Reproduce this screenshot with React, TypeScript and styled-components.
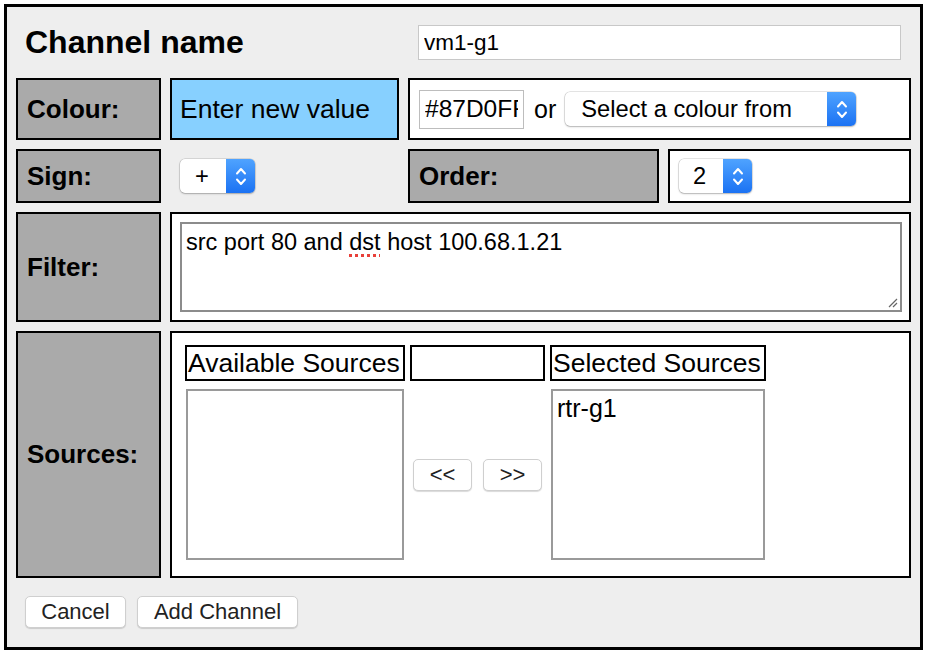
import React from 'react';
import styled, { createGlobalStyle } from 'styled-components';

const GlobalStyle = createGlobalStyle`
  html, body {
    margin: 0;
    padding: 0;
    background: #fff;
  }
  body {
    font-family: "Liberation Sans", Arial, sans-serif;
    color: #000;
  }
`;

const Dialog = styled.div`
  box-sizing: border-box;
  margin: 4px 0 0 4px;
  width: 919px;
  height: 646px;
  border: 3px solid #000;
  background: #eee;
  display: flex;
  flex-direction: column;
`;

const FormGrid = styled.div`
  margin: 9px;
  display: grid;
  grid-template-columns: 145px 229px 251px 243px;
  grid-template-rows: 53px 62px 54px 110px 247px;
  gap: 9px;
`;

const Cell = styled.div<{ span?: string; bg?: string; bordered?: boolean }>`
  box-sizing: border-box;
  grid-column: ${({ span }) => span || 'auto'};
  background: ${({ bg }) => bg || 'transparent'};
  border: 2px solid ${({ bordered }) => (bordered ? '#000' : 'transparent')};
  display: flex;
  align-items: center;
  padding: 0 8px;
  min-width: 0;
`;

const HeadingCell = styled.div`
  grid-column: 1 / 3;
  display: flex;
  align-items: center;
  padding: 0 9px;
  font-size: 32px;
  font-weight: bold;
`;

const LabelCell = styled(Cell).attrs({ bordered: true, bg: '#aaa' })`
  font-size: 26px;
  font-weight: bold;
  padding-left: 9px;
`;

const PromptCell = styled(Cell)`
  font-size: 26.5px;
`;

const TextInput = styled.input<{ w: number }>`
  box-sizing: border-box;
  width: ${({ w }) => w}px;
  height: 35px;
  border: 1px solid #c8c8c8;
  background: #fff;
  padding: 0 5px;
  font-family: "Liberation Sans", Arial, sans-serif;
  font-size: 22.5px;
  color: #000;
  outline: none;
`;

const HexInput = styled(TextInput)`
  height: 39px;
  font-size: 24.5px;
  border-color: #bdbdbd;
`;

const OrText = styled.span`
  font-size: 25px;
  margin: 0 9px 0 10px;
`;

const SelectBox = styled.div<{ w: number }>`
  box-sizing: border-box;
  width: ${({ w }) => w}px;
  height: 34px;
  display: flex;
  border-radius: 5px;
  background: #fff;
  box-shadow: 0 0 0 0.5px rgba(0, 0, 0, 0.2), 0 1px 2px rgba(0, 0, 0, 0.22);
  overflow: hidden;
`;

const SelectValue = styled.div<{ pad: number }>`
  flex: 1;
  display: flex;
  align-items: center;
  padding-left: ${({ pad }) => pad}px;
  font-size: 23.7px;
  white-space: nowrap;
  overflow: hidden;
`;

const Stepper = styled.div`
  width: 29px;
  display: flex;
  flex-direction: column;
  align-items: center;
  justify-content: center;
  gap: 3px;
  background: linear-gradient(#4fa3ff, #1b72f3);
`;

const Chevrons = () => (
  <>
    <svg width="12" height="8" viewBox="0 0 12 8">
      <path d="M2 6.5 L6 2 L10 6.5" fill="none" stroke="#fff" strokeWidth="2" strokeLinecap="round" strokeLinejoin="round" />
    </svg>
    <svg width="12" height="8" viewBox="0 0 12 8">
      <path d="M2 1.5 L6 6 L10 1.5" fill="none" stroke="#fff" strokeWidth="2" strokeLinecap="round" strokeLinejoin="round" />
    </svg>
  </>
);

function MacSelect({ value, width, pad }: { value: string; width: number; pad: number }) {
  return (
    <SelectBox w={width}>
      <SelectValue pad={pad}>{value}</SelectValue>
      <Stepper>
        <Chevrons />
      </Stepper>
    </SelectBox>
  );
}

const FilterCell = styled(Cell)`
  padding: 8px 7px 8px 8px;
  align-items: stretch;
`;

const FilterBox = styled.div`
  position: relative;
  flex: 1;
  box-sizing: border-box;
  border: 2px solid #8c8c8c;
  background: #fff;
  padding: 4px 4px;
  font-size: 23.5px;
  line-height: 28px;
`;

const Misspelt = styled.span`
  text-decoration: underline dotted #e8403a;
  text-decoration-thickness: 3px;
  text-underline-offset: 4px;
`;

const Grip = styled.svg`
  position: absolute;
  right: 2px;
  bottom: 2px;
`;

const SourcesCell = styled(Cell)`
  align-items: flex-start;
  padding: 12px 0 0 13px;
`;

const SourcesGrid = styled.div`
  display: grid;
  grid-template-columns: 220px 135px 216px;
  grid-template-rows: 36px 171px;
  column-gap: 5px;
  row-gap: 8px;
`;

const SourceHeader = styled.div`
  box-sizing: border-box;
  border: 2px solid #000;
  padding: 0 1px;
  font-size: 26.5px;
  display: flex;
  align-items: center;
  white-space: nowrap;
  overflow: hidden;
`;

const ListBox = styled.div`
  box-sizing: border-box;
  margin: 0 1px;
  border: 2px solid #9a9a9a;
  background: #fff;
  padding: 3px 4px;
  font-size: 25px;
`;

const MoveButtons = styled.div`
  display: flex;
  align-items: center;
  justify-content: center;
  gap: 11px;
`;

const PushButton = styled.button<{ w?: number }>`
  box-sizing: border-box;
  height: 32px;
  width: ${({ w }) => (w ? `${w}px` : 'auto')};
  padding: 0 14px;
  border: 1px solid #cfcfcf;
  border-radius: 5px;
  background: #fff;
  box-shadow: 0 1px 1px rgba(0, 0, 0, 0.15);
  font-family: "Liberation Sans", Arial, sans-serif;
  font-size: 22px;
  color: #222;
  cursor: pointer;
`;

const ButtonRow = styled.div`
  display: flex;
  gap: 11px;
  padding: 9px 18px 0;
`;

export default function App() {
  return (
    <>
      <GlobalStyle />
      <Dialog>
        <FormGrid>
          <HeadingCell>Channel name</HeadingCell>
          <Cell span="3 / 5">
            <TextInput w={486} defaultValue="vm1-g1" />
          </Cell>

          <LabelCell>Colour:</LabelCell>
          <PromptCell bordered bg="#87D0FF">Enter new value</PromptCell>
          <Cell span="3 / 5" bordered bg="#fff" style={{ paddingLeft: 9 }}>
            <HexInput w={105} defaultValue="#87D0FF" />
            <OrText>or</OrText>
            <MacSelect value="Select a colour from" width={291} pad={16} />
          </Cell>

          <LabelCell>Sign:</LabelCell>
          <Cell style={{ paddingLeft: 8 }}>
            <MacSelect value="+" width={75} pad={15} />
          </Cell>
          <LabelCell>Order:</LabelCell>
          <Cell bordered bg="#fff" style={{ paddingLeft: 9 }}>
            <MacSelect value="2" width={73} pad={14} />
          </Cell>

          <LabelCell>Filter:</LabelCell>
          <FilterCell span="2 / 5" bordered bg="#fff">
            <FilterBox>
              src port 80 and <Misspelt>dst</Misspelt> host 100.68.1.21
              <Grip width="12" height="12" viewBox="0 0 12 12">
                <path d="M11 3 L3 11 M11 7 L7 11" stroke="#666" strokeWidth="1.2" />
              </Grip>
            </FilterBox>
          </FilterCell>

          <LabelCell>Sources:</LabelCell>
          <SourcesCell span="2 / 5" bordered bg="#fff">
            <SourcesGrid>
              <SourceHeader>Available Sources</SourceHeader>
              <SourceHeader />
              <SourceHeader>Selected Sources</SourceHeader>
              <ListBox />
              <MoveButtons>
                <PushButton w={59}>&lt;&lt;</PushButton>
                <PushButton w={59}>&gt;&gt;</PushButton>
              </MoveButtons>
              <ListBox>rtr-g1</ListBox>
            </SourcesGrid>
          </SourcesCell>
        </FormGrid>
        <ButtonRow>
          <PushButton w={101}>Cancel</PushButton>
          <PushButton w={161}>Add Channel</PushButton>
        </ButtonRow>
      </Dialog>
    </>
  );
}
